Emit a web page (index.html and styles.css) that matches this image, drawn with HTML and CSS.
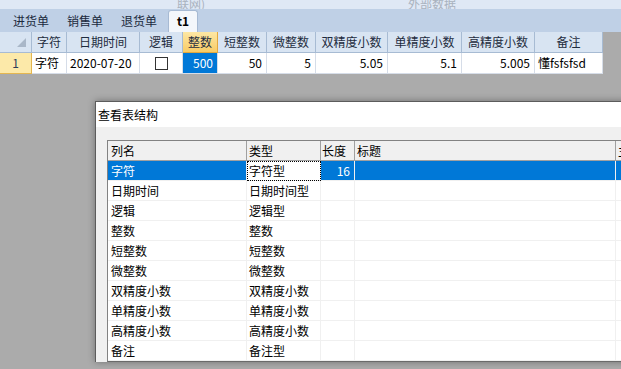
FILE: index.html
```html
<!DOCTYPE html>
<html lang="zh-CN">
<head>
    <meta charset="UTF-8">
    <title>查看表结构</title>
    <link rel="stylesheet" href="styles.css">
</head>
<body>
    <div class="top-strip">
        <span class="ghost g1">联网)</span>
        <span class="ghost g2">外部数据</span>
    </div>

    <div class="tabbar">
        <span class="tab">进货单</span>
        <span class="tab">销售单</span>
        <span class="tab">退货单</span>
        <span class="tab active">t1</span>
    </div>

    <div class="sheet">
        <div class="srow shead">
            <div class="c rh corner"><span class="tri"></span></div>
            <div class="c w-zf">字符</div>
            <div class="c w-rq">日期时间</div>
            <div class="c w-lj">逻辑</div>
            <div class="c w-zs hot">整数</div>
            <div class="c w-dz">短整数</div>
            <div class="c w-wz">微整数</div>
            <div class="c w-sj">双精度小数</div>
            <div class="c w-dj">单精度小数</div>
            <div class="c w-gj">高精度小数</div>
            <div class="c w-bz">备注</div>
        </div>
        <div class="srow sdata">
            <div class="c rh">1</div>
            <div class="c w-zf">字符</div>
            <div class="c w-rq">2020-07-20</div>
            <div class="c w-lj mid"><span class="chk"></span></div>
            <div class="c w-zs num cur">500</div>
            <div class="c w-dz num">50</div>
            <div class="c w-wz num">5</div>
            <div class="c w-sj num">5.05</div>
            <div class="c w-dj num">5.1</div>
            <div class="c w-gj num">5.005</div>
            <div class="c w-bz">懂fsfsfsd</div>
        </div>
    </div>

    <div class="workspace">
        <div class="dialog">
            <div class="dlg-title">查看表结构</div>
            <div class="dlg-body">
                <div class="list">
                    <div class="lrow lhead">
                        <div class="lc l1">列名</div>
                        <div class="lc l2">类型</div>
                        <div class="lc l3">长度</div>
                        <div class="lc l4">标题</div>
                        <div class="lc l5">主键</div>
                    </div>
                    <div class="lrow sel">
                        <div class="lc l1">字符</div>
                        <div class="lc l2 focus">字符型</div>
                        <div class="lc l3 num">16</div>
                        <div class="lc l4"></div>
                        <div class="lc l5"></div>
                    </div>
                    <div class="lrow">
                        <div class="lc l1">日期时间</div>
                        <div class="lc l2">日期时间型</div>
                        <div class="lc l3"></div>
                        <div class="lc l4"></div>
                        <div class="lc l5"></div>
                    </div>
                    <div class="lrow">
                        <div class="lc l1">逻辑</div>
                        <div class="lc l2">逻辑型</div>
                        <div class="lc l3"></div>
                        <div class="lc l4"></div>
                        <div class="lc l5"></div>
                    </div>
                    <div class="lrow">
                        <div class="lc l1">整数</div>
                        <div class="lc l2">整数</div>
                        <div class="lc l3"></div>
                        <div class="lc l4"></div>
                        <div class="lc l5"></div>
                    </div>
                    <div class="lrow">
                        <div class="lc l1">短整数</div>
                        <div class="lc l2">短整数</div>
                        <div class="lc l3"></div>
                        <div class="lc l4"></div>
                        <div class="lc l5"></div>
                    </div>
                    <div class="lrow">
                        <div class="lc l1">微整数</div>
                        <div class="lc l2">微整数</div>
                        <div class="lc l3"></div>
                        <div class="lc l4"></div>
                        <div class="lc l5"></div>
                    </div>
                    <div class="lrow">
                        <div class="lc l1">双精度小数</div>
                        <div class="lc l2">双精度小数</div>
                        <div class="lc l3"></div>
                        <div class="lc l4"></div>
                        <div class="lc l5"></div>
                    </div>
                    <div class="lrow">
                        <div class="lc l1">单精度小数</div>
                        <div class="lc l2">单精度小数</div>
                        <div class="lc l3"></div>
                        <div class="lc l4"></div>
                        <div class="lc l5"></div>
                    </div>
                    <div class="lrow">
                        <div class="lc l1">高精度小数</div>
                        <div class="lc l2">高精度小数</div>
                        <div class="lc l3"></div>
                        <div class="lc l4"></div>
                        <div class="lc l5"></div>
                    </div>
                    <div class="lrow">
                        <div class="lc l1">备注</div>
                        <div class="lc l2">备注型</div>
                        <div class="lc l3"></div>
                        <div class="lc l4"></div>
                        <div class="lc l5"></div>
                    </div>
                </div>
            </div>
        </div>
    </div>
</body>
</html>
```

FILE: styles.css
```css
body {
    margin: 0;
    width: 621px;
    height: 369px;
    overflow: hidden;
    background: #ababab;
    font-family: "Noto Sans CJK SC", sans-serif;
    font-size: 12px;
    color: #000;
}

/* faded ribbon text, mostly scrolled out of view */
.top-strip {
    height: 9px;
    background: #dfe8f5;
    display: flex;
    align-items: flex-end;
    overflow: hidden;
    color: #a9b2be;
    line-height: 14px;
}

.ghost {
    margin-bottom: -2px;
    white-space: nowrap;
}

.g1 {
    margin-left: 177px;
}

.g2 {
    margin-left: 203px;
}

.tabbar {
    height: 23px;
    background: #bfd0e6;
    display: flex;
    align-items: flex-end;
    padding-left: 13px;
}

.tab {
    height: 21px;
    line-height: 20px;
    margin-right: 18px;
    color: #1b2a3d;
}

.tab.active {
    box-sizing: border-box;
    height: 22px;
    margin-left: -7px;
    padding: 0 8px;
    background: #f4f7fb;
    border: 1px solid #a7bad3;
    border-bottom: none;
    border-radius: 3px 3px 0 0;
    font-weight: bold;
    color: #000;
}

/* data sheet */
.sheet {
    width: 603px;
    background: #fff;
}

.srow {
    display: flex;
    height: 21px;
}

.c {
    flex: none;
    box-sizing: border-box;
    border-right: 1px solid #d6dde8;
    border-bottom: 1px solid #d6dde8;
    line-height: 20px;
    padding: 0 3px;
    white-space: nowrap;
    overflow: hidden;
}

.shead .c {
    background: #d8e4f2;
    border-color: #a7bbd3;
    text-align: center;
    padding: 0;
    color: #1e2c3e;
}

.shead .c.hot {
    background: linear-gradient(#fde7a4, #f9cc66);
    border-color: #e3a83e;
}

.rh {
    width: 32px;
}

.sdata .rh {
    background: #fce9a9;
    border-right-color: #e4b650;
    border-bottom-color: #e4b650;
    text-align: center;
    color: #2c3e5a;
}

.shead .corner {
    display: flex;
    justify-content: flex-end;
    align-items: flex-end;
    padding: 0 5px 5px 0;
}

.tri {
    width: 0;
    height: 0;
    border-left: 9px solid transparent;
    border-bottom: 9px solid #a9b7c8;
}

.w-zf { width: 35px; }
.w-rq { width: 73px; }
.w-lj { width: 43px; }
.w-zs { width: 35px; }
.w-dz { width: 49px; }
.w-wz { width: 49px; }
.w-sj { width: 72px; }
.w-dj { width: 74px; }
.w-gj { width: 73px; }
.w-bz { width: 68px; }

.num {
    text-align: right;
    padding-right: 4px;
}

.mid {
    display: flex;
    align-items: center;
    justify-content: center;
}

.cur {
    background: #0078d7;
    color: #fff;
}

.chk {
    width: 11px;
    height: 11px;
    border: 1px solid #333;
    background: #fff;
}

/* dialog */
.workspace {
    padding: 27px 0 0 95px;
}

.dialog {
    width: 560px;
    border: 1px solid #5c5c5c;
    border-bottom: none;
    box-shadow: 0 0 7px rgba(0, 0, 0, 0.35);
    background: #f0f0f0;
}

.dlg-title {
    height: 25px;
    line-height: 25px;
    padding-left: 2px;
    background: #fff;
}

.dlg-body {
    padding: 13px 0 0 11px;
}

.list {
    border: 1px solid #828282;
    border-right: none;
    border-bottom-color: #6a6a6a;
    background: #fff;
    overflow: hidden;
}

.lrow {
    display: flex;
    height: 20px;
}

.lc {
    flex: none;
    box-sizing: border-box;
    border-right: 1px solid #f0f0f0;
    border-bottom: 1px solid #f0f0f0;
    line-height: 19px;
    padding-left: 2px;
    white-space: nowrap;
    overflow: hidden;
}

.lhead .lc {
    background: #f0f0f0;
    border-right-color: #a0a0a0;
    border-bottom-color: #a0a0a0;
}

.l1 { width: 139px; padding-left: 3px; }
.l2 { width: 74px; }
.l3 { width: 34px; padding-left: 1px; }
.l4 { width: 261px; }
.l5 { width: 100px; }

.lc.num {
    text-align: right;
    padding-right: 4px;
}

.sel .lc {
    background: #0078d7;
    color: #fff;
}

.sel .lc.focus {
    background: #fff;
    color: #000;
    outline: 1px dotted #000;
    outline-offset: -1px;
}
```
